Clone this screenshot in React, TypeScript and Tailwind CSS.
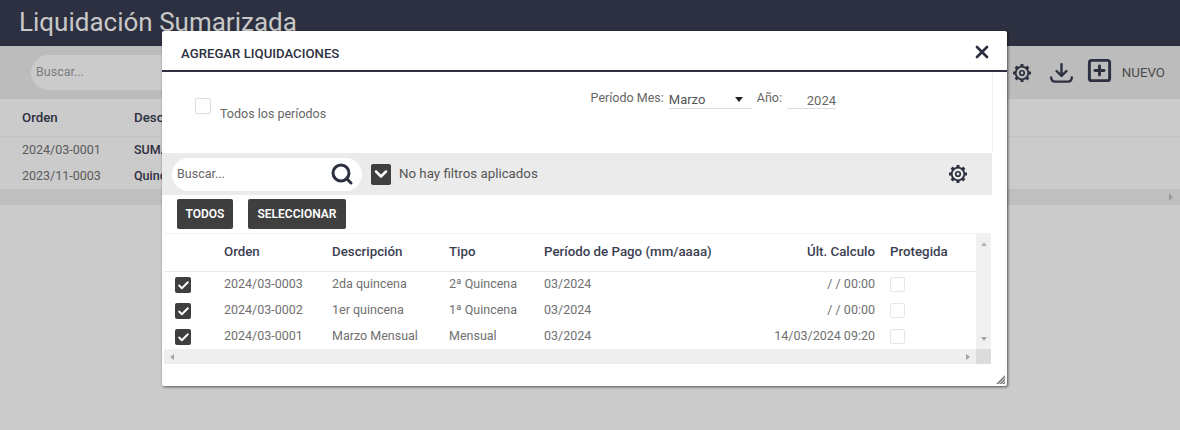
import { Check, ChevronDown, Search, SquarePlus, X } from "lucide-react";

const rows = [
  { orden: "2024/03-0003", desc: "2da quincena", tipo: "2ª Quincena", periodo: "03/2024", calc: "/ / 00:00" },
  { orden: "2024/03-0002", desc: "1er quincena", tipo: "1ª Quincena", periodo: "03/2024", calc: "/ / 00:00" },
  { orden: "2024/03-0001", desc: "Marzo Mensual", tipo: "Mensual", periodo: "03/2024", calc: "14/03/2024 09:20" },
];

const teeth = [0, 45, 90, 135, 180, 225, 270, 315];

function Gear({ className }: { className: string }) {
  return (
    <svg className={className} viewBox="0 0 24 24" fill="none" stroke="currentColor">
      <circle cx="12" cy="12" r="7.6" strokeWidth="2.2" />
      <circle cx="12" cy="12" r="2.7" strokeWidth="2" />
      {teeth.map((deg) => (
        <path key={deg} d="M12 1.2V4.4" strokeWidth="3.6" transform={`rotate(${deg} 12 12)`} />
      ))}
    </svg>
  );
}

function DownloadTray({ className }: { className: string }) {
  return (
    <svg className={className} viewBox="0 0 23 20" fill="none" stroke="currentColor" strokeWidth="2.4" strokeLinecap="round" strokeLinejoin="round">
      <path d="M11.5 1.2V12.5M6.5 8 11.5 12.8 16.5 8" />
      <path d="M1.2 14.5C1.4 17.4 3 18.6 5 18.6H18C20 18.6 21.6 17.4 21.8 14.5" />
    </svg>
  );
}

function CheckedBox({ className }: { className: string }) {
  return (
    <span className={`flex items-center justify-center rounded-[2px] bg-[#3f3f3f] text-white ${className}`}>
      <Check className="h-[13px] w-[13px]" strokeWidth={3.5} />
    </span>
  );
}

function Background() {
  return (
    <div className="h-[430px] bg-[#cbcbcb] text-[#5a5a5a]">
      <header className="flex h-[46px] items-center bg-[#2d3040] pl-[19px] text-[26px] text-[#c8c8c8]">
        <h1 className="-mt-[2px]">Liquidación Sumarizada</h1>
      </header>

      <div className="flex h-[53px] items-center justify-between bg-[#bcbcbc] pl-[31px] pr-[15px]">
        <div className="flex h-[35px] w-[220px] items-center rounded-full bg-[#cbcbcb] pl-[5px] text-[12.5px] text-[#7c7c7c]">
          Buscar...
        </div>
        <div className="flex items-center text-[#2d3040]">
          <Gear className="h-[20px] w-[20px]" />
          <DownloadTray className="ml-[18px] h-[20px] w-[23px]" />
          <SquarePlus className="-mt-[4px] ml-[13px] h-[27px] w-[27px]" strokeWidth={2.6} />
          <span className="ml-[9px] text-[13.3px] text-[#4a4a4a]">NUEVO</span>
        </div>
      </div>

      <div className="flex h-[38px] items-center border-b border-[#c3c3c3] pl-[22px] text-[13.3px] font-medium text-[#2d3040]">
        <span className="w-[112px]">Orden</span>
        <span>Descripción</span>
      </div>
      <div className="flex h-[26px] items-center pl-[22px] text-[12.5px]">
        <span className="w-[112px]">2024/03-0001</span>
        <span className="font-medium text-[#2d3040]">SUMARIZADA</span>
      </div>
      <div className="flex h-[26px] items-center pl-[22px] text-[12.5px]">
        <span className="w-[112px]">2023/11-0003</span>
        <span className="font-medium text-[#2d3040]">Quincena</span>
      </div>
      <div className="flex h-[16px] items-center justify-end bg-[#bfbfbf] pr-[7px]">
        <span className="h-0 w-0 border-y-[4px] border-l-[4px] border-y-transparent border-l-[#9a9a9a]" />
      </div>
    </div>
  );
}

function Modal() {
  return (
    <div className="absolute left-[162px] top-[31px] flex h-[355px] w-[845px] flex-col rounded-[2px] bg-white shadow-[1px_1px_3px_rgba(0,0,0,0.6)]">
      <div className="flex h-[41px] shrink-0 items-center justify-between border-b-2 border-[#2d3040] pl-[19px] pr-[15px]">
        <span className="mt-[6px] text-[13.2px] font-medium text-[#2d3040]">AGREGAR LIQUIDACIONES</span>
        <X className="mt-[2px] h-[20px] w-[20px] text-[#2d3040]" strokeWidth={3.2} />
      </div>

      <div className="mr-[14px] flex h-[81px] shrink-0 items-start justify-between border-r border-[#f0f0f0] pl-[33px] pr-[156px]">
        <label className="mt-[26px] flex items-start text-[12.5px] text-[#666666]">
          <span className="h-[16px] w-[16px] rounded-[2px] border border-[#dddddd]" />
          <span className="ml-[9px] mt-[8px] leading-[15px]">Todos los períodos</span>
        </label>
        <div className="mt-[18px] flex items-start text-[12.5px] text-[#666666]">
          <span className="leading-[15px]">Período Mes:</span>
          <span className="ml-[5px] flex h-[19px] w-[83px] items-center justify-between border-b border-[#dddddd] pr-[9px] pt-[1px] text-[13px] text-[#555555]">
            Marzo
            <span className="h-0 w-0 border-x-[4px] border-t-[5px] border-x-transparent border-t-[#222222]" />
          </span>
          <span className="ml-[5px] leading-[15px]">Año:</span>
          <span className="ml-[5px] h-[19px] w-[49px] border-b border-[#dddddd] pt-[1px] text-right text-[13px]">2024</span>
        </div>
      </div>

      <div className="mr-[15px] flex h-[42px] shrink-0 items-center bg-[#ebebeb] pl-[10px] pr-[24px]">
        <div className="flex h-[33px] w-[190px] items-center justify-between rounded-full bg-white pl-[5px] pr-[8px] text-[12.5px] text-[#666666]">
          Buscar...
          <Search className="h-[24px] w-[24px] text-[#2d3040]" strokeWidth={3} />
        </div>
        <span className="ml-[9px] flex h-[21px] w-[20px] items-center justify-center rounded-[2px] bg-[#3f3f3f] text-white">
          <ChevronDown className="h-[20px] w-[20px]" strokeWidth={3} />
        </span>
        <span className="ml-[8px] text-[13.3px] text-[#555555]">No hay filtros aplicados</span>
        <Gear className="ml-auto h-[20px] w-[20px] text-[#2d3040]" />
      </div>

      <div className="mt-[4px] flex shrink-0 gap-[15px] pl-[15px]">
        <button className="h-[30px] w-[56px] rounded-[2px] bg-[#3f3f3f] text-[12px] font-semibold text-white">TODOS</button>
        <button className="h-[30px] w-[98px] rounded-[2px] bg-[#3f3f3f] text-[12px] font-semibold text-white">SELECCIONAR</button>
      </div>

      <div className="ml-[2px] mr-[16px] mt-[4px] flex h-[131px] flex-col border-t border-[#f2f2f2]">
        <div className="flex min-h-0 flex-1">
          <table className="w-[812px] table-fixed text-left text-[12.5px] text-[#707070]">
            <thead>
              <tr className="h-[37px] border-b border-[#e8e8e8] text-[13.3px] text-[#3b3e52]">
                <th className="w-[60px]" />
                <th className="w-[108px] font-medium">Orden</th>
                <th className="w-[117px] font-medium">Descripción</th>
                <th className="w-[95px] font-medium">Tipo</th>
                <th className="w-[200px] font-medium">Período de Pago (mm/aaaa)</th>
                <th className="w-[131px] text-right font-medium">Últ. Calculo</th>
                <th className="pl-[15px] font-medium">Protegida</th>
              </tr>
            </thead>
            <tbody>
              {rows.map((row) => (
                <tr key={row.orden} className="h-[26px]">
                  <td className="pl-[11px]">
                    <CheckedBox className="h-[16px] w-[16px] translate-y-[1px]" />
                  </td>
                  <td>{row.orden}</td>
                  <td>{row.desc}</td>
                  <td>{row.tipo}</td>
                  <td>{row.periodo}</td>
                  <td className="text-right">{row.calc}</td>
                  <td className="pl-[15px]">
                    <span className="block h-[15px] w-[15px] rounded-[2px] border border-[#e6e6e6]" />
                  </td>
                </tr>
              ))}
            </tbody>
          </table>
          <div className="flex w-[15px] flex-col items-center justify-between bg-[#f1f1f1] py-[8px]">
            <span className="h-0 w-0 border-x-[3.5px] border-b-[4px] border-x-transparent border-b-[#b5b5b5]" />
            <span className="h-0 w-0 border-x-[3.5px] border-t-[4px] border-x-transparent border-t-[#a5a5a5]" />
          </div>
        </div>
        <div className="flex h-[15px] shrink-0">
          <div className="flex flex-1 items-center justify-between bg-[#efefef] px-[6px]">
            <span className="h-0 w-0 border-y-[3.5px] border-r-[4px] border-y-transparent border-r-[#a5a5a5]" />
            <span className="h-0 w-0 border-y-[3.5px] border-l-[4px] border-y-transparent border-l-[#a5a5a5]" />
          </div>
          <div className="w-[15px] bg-[#dcdcdc]" />
        </div>
      </div>

      <svg className="absolute bottom-[2px] right-[2px] h-[9px] w-[9px]" viewBox="0 0 9 9">
        <path d="M9 0V9H0Z" fill="#8a8a8a" />
        <path d="M3 9 9 3M6 9 9 6" stroke="#e0e0e0" strokeWidth="0.8" />
      </svg>
    </div>
  );
}

export default function App() {
  return (
    <div className="relative h-[430px] w-[1180px] overflow-hidden font-['Roboto',sans-serif]">
      <Background />
      <Modal />
    </div>
  );
}
